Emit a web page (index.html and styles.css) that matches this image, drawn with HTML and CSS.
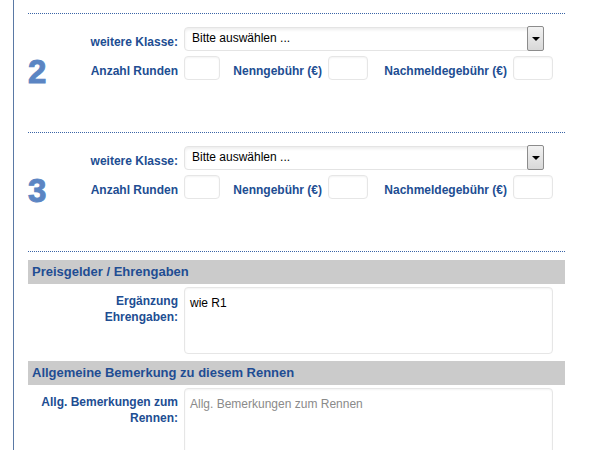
FILE: index.html
```html
<!DOCTYPE html>
<html lang="de">
<head>
    <meta charset="UTF-8">
    <title>Rennen - weitere Klassen</title>
    <link rel="stylesheet" href="styles.css">
</head>
<body>
    <div class="wrap">
        <!-- weitere Klasse 2 -->
        <div class="race">
            <div class="race-num">2</div>
            <div class="race-rows">
                <div class="row">
                    <label class="lbl">weitere Klasse:</label>
                    <div class="select">
                        <span class="select-text">Bitte auswählen ...</span>
                        <span class="select-btn"><span class="arrow"></span></span>
                    </div>
                </div>
                <div class="row row-small">
                    <label class="lbl">Anzahl Runden</label>
                    <input type="text" class="inp inp-runden">
                    <label class="lbl lbl-fee">Nenngebühr (€)</label>
                    <input type="text" class="inp">
                    <label class="lbl lbl-late">Nachmeldegebühr (€)</label>
                    <input type="text" class="inp">
                </div>
            </div>
        </div>

        <!-- weitere Klasse 3 -->
        <div class="race">
            <div class="race-num">3</div>
            <div class="race-rows">
                <div class="row">
                    <label class="lbl">weitere Klasse:</label>
                    <div class="select">
                        <span class="select-text">Bitte auswählen ...</span>
                        <span class="select-btn"><span class="arrow"></span></span>
                    </div>
                </div>
                <div class="row row-small">
                    <label class="lbl">Anzahl Runden</label>
                    <input type="text" class="inp inp-runden">
                    <label class="lbl lbl-fee">Nenngebühr (€)</label>
                    <input type="text" class="inp">
                    <label class="lbl lbl-late">Nachmeldegebühr (€)</label>
                    <input type="text" class="inp">
                </div>
            </div>
        </div>

        <div class="extras">
            <h3 class="section-head">Preisgelder / Ehrengaben</h3>
            <div class="form-row">
                <label class="lbl lbl-wide">Ergänzung<br>Ehrengaben:</label>
                <textarea class="txt txt-short">wie R1</textarea>
            </div>

            <h3 class="section-head">Allgemeine Bemerkung zu diesem Rennen</h3>
            <div class="form-row">
                <label class="lbl lbl-wide">Allg. Bemerkungen zum<br>Rennen:</label>
                <textarea class="txt txt-long" placeholder="Allg. Bemerkungen zum Rennen"></textarea>
            </div>
        </div>
    </div>
</body>
</html>
```

FILE: styles.css
```css
body {
    margin: 0;
    padding: 0;
    font-family: 'Liberation Sans', Arial, sans-serif;
    font-size: 12px;
    background: #fff;
    overflow: hidden;
}
.wrap {
    margin-left: 13px;
    border-left: 1px solid #5a79a5;
    padding: 13px 0 0 14px;
    width: 537px;
    min-height: 100vh;
}
.race {
    display: flex;
    align-items: flex-start;
    border-top: 1px dotted #3a64a6;
    padding: 13px 0 52px;
}
.race-num {
    width: 50px;
    padding-top: 28px;
    margin-bottom: -12px;
    font-size: 33px;
    line-height: 33px;
    font-weight: bold;
    color: #5b85c3;
    -webkit-text-stroke: 1px #5b85c3;
}
.race-rows {
    display: flex;
    flex-direction: column;
    gap: 5px;
}
.row {
    display: flex;
    align-items: flex-start;
}
.row .lbl {
    padding-top: 7px;
}
.lbl {
    width: 100px;
    margin-right: 6px;
    text-align: right;
    font-weight: bold;
    color: #214d92;
    line-height: 16px;
    flex-shrink: 0;
}
.lbl-fee {
    width: 102px;
}
.lbl-late {
    width: 139px;
}
.select {
    width: 360px;
    height: 24px;
    box-sizing: border-box;
    display: flex;
    align-items: stretch;
    border: 1px solid #e4e4e4;
    border-radius: 4px;
    box-shadow: inset 0 2px 3px rgba(0, 0, 0, 0.07);
    background: #fff;
}
.select-text {
    flex: 1;
    padding-left: 7px;
    line-height: 21px;
    color: #000;
}
.select-btn {
    width: 15px;
    margin: -2px -1px -1px 0;
    border: 1px solid #8c8c8c;
    border-radius: 2px;
    background: linear-gradient(#f2f2f2, #d8d8d8);
    display: flex;
    align-items: center;
    justify-content: center;
}
.arrow {
    width: 0;
    height: 0;
    border-left: 4px solid transparent;
    border-right: 4px solid transparent;
    border-top: 4px solid #000;
}
.inp {
    width: 40px;
    height: 24px;
    box-sizing: border-box;
    margin: 0;
    padding: 2px 4px;
    border: 1px solid #e6e6e6;
    border-radius: 4px;
    box-shadow: inset 0 1px 2px rgba(0, 0, 0, 0.05);
    font-family: inherit;
    font-size: 12px;
}
.inp-runden {
    width: 36px;
}
.extras {
    border-top: 1px dotted #3a64a6;
    padding-top: 8px;
}
.section-head {
    margin: 0;
    height: 24px;
    padding-left: 4px;
    background: #cbcbcb;
    font-size: 13px;
    line-height: 24px;
    font-weight: bold;
    color: #1f4d93;
}
.form-row {
    display: flex;
    align-items: flex-start;
    margin: 3px 0 7px;
}
.lbl-wide {
    width: 150px;
    padding-top: 6px;
}
.txt {
    width: 369px;
    box-sizing: border-box;
    margin: 0;
    padding: 8px 5px;
    border: 1px solid #e6e6e6;
    border-radius: 4px;
    box-shadow: inset 0 1px 2px rgba(0, 0, 0, 0.05);
    font-family: inherit;
    font-size: 12px;
    color: #000;
    resize: none;
}
.txt::placeholder {
    color: #8a8a8a;
}
.txt-short {
    height: 67px;
}
.txt-long {
    height: 90px;
}
```
